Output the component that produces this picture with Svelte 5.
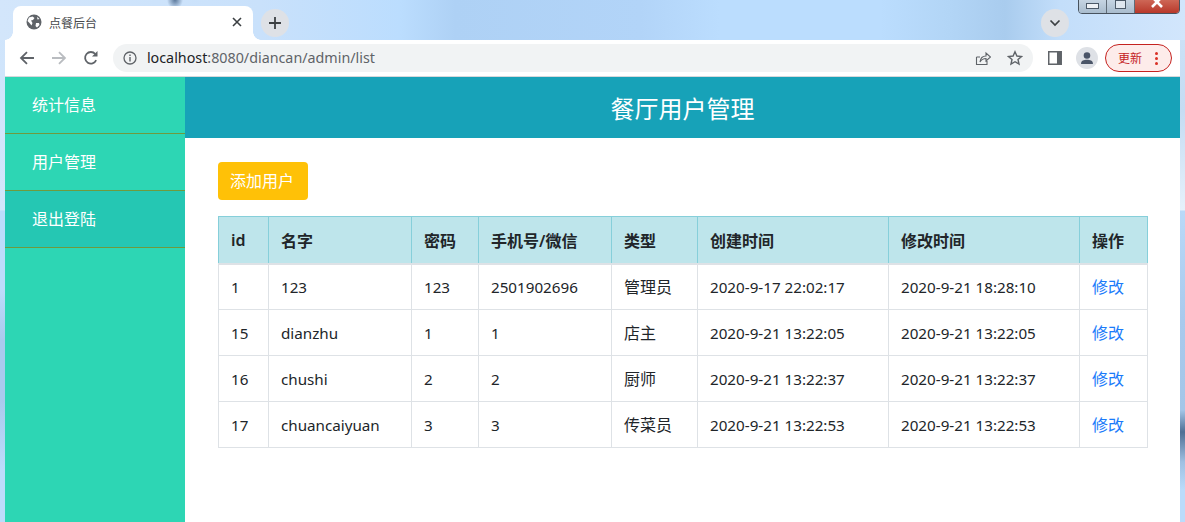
<script lang="ts">
  const menu = [
    { label: '统计信息', active: false },
    { label: '用户管理', active: false },
    { label: '退出登陆', active: true }
  ];

  const cols = ['id', '名字', '密码', '手机号/微信', '类型', '创建时间', '修改时间', '操作'];

  const users = [
    { id: 1, name: '123', pwd: '123', phone: '2501902696', type: '管理员', created: '2020-9-17 22:02:17', updated: '2020-9-21 18:28:10' },
    { id: 15, name: 'dianzhu', pwd: '1', phone: '1', type: '店主', created: '2020-9-21 13:22:05', updated: '2020-9-21 13:22:05' },
    { id: 16, name: 'chushi', pwd: '2', phone: '2', type: '厨师', created: '2020-9-21 13:22:37', updated: '2020-9-21 13:22:37' },
    { id: 17, name: 'chuancaiyuan', pwd: '3', phone: '3', type: '传菜员', created: '2020-9-21 13:22:53', updated: '2020-9-21 13:22:53' }
  ];
</script>

<div class="desktop">
  <div class="winctl">
    <span class="wbtn"><i class="min"></i></span>
    <span class="wbtn"><i class="max"></i></span>
    <span class="wbtn close">
      <svg width="14" height="11" viewBox="0 0 14 11"><path d="M2 -2 L12 8 M12 -2 L2 8" stroke="#fff" stroke-width="2.6" /></svg>
    </span>
  </div>

  <div class="browser">
    <div class="tabstrip">
      <div class="tab">
        <svg class="globe" width="16" height="16" viewBox="0 0 16 16">
          <circle cx="8" cy="8" r="7.5" fill="#5f6368" />
          <path d="M3 3.5 L6.5 2.5 L8.500 4 L7 6 L5 6.500 L6.500 9 L5.500 11.500 L3.500 9 L1.500 7 Z M10 9 L13 9 L13.500 11 L11 13.500 L9.500 12 Z M11 2.800 L13.500 5 L11.500 5.500 Z" fill="#fff" />
        </svg>
        <span class="tabtitle">点餐后台</span>
        <svg class="tabx" width="12" height="12" viewBox="0 0 12 12">
          <path d="M2 2 L10 10 M10 2 L2 10" stroke="#3c4043" stroke-width="1.6" />
        </svg>
      </div>
      <button class="newtab" aria-label="new tab">
        <svg width="14" height="14" viewBox="0 0 14 14"><path d="M7 1 V13 M1 7 H13" stroke="#3c4043" stroke-width="1.8" /></svg>
      </button>
      <button class="tabsearch" aria-label="tab search">
        <svg width="12" height="8" viewBox="0 0 12 8"><path d="M1.500 1.500 L6 6 L10.500 1.500" fill="none" stroke="#3c4043" stroke-width="1.7" /></svg>
      </button>
    </div>

    <div class="toolbar">
      <svg class="navicon" width="16" height="16" viewBox="0 0 16 16"><path d="M15 8 H2 M8 2 L2 8 L8 14" fill="none" stroke="#5f6368" stroke-width="1.8" /></svg>
      <svg class="navicon" width="16" height="16" viewBox="0 0 16 16"><path d="M1 8 H14 M8 2 L14 8 L8 14" fill="none" stroke="#b9bcc0" stroke-width="1.8" /></svg>
      <svg class="navicon" width="16" height="16" viewBox="0 0 16 16">
        <path d="M13.200 10.200 A5.800 5.800 0 1 1 12.300 4" fill="none" stroke="#5f6368" stroke-width="1.8" />
        <path d="M14.500 1 V6.500 H9 Z" fill="#5f6368" />
      </svg>
      <div class="omnibox">
        <svg width="14" height="14" viewBox="0 0 14 14">
          <circle cx="7" cy="7" r="6" fill="none" stroke="#5f6368" stroke-width="1.3" />
          <path d="M7 6 V10.500 M7 3.400 V4.900" stroke="#5f6368" stroke-width="1.4" />
        </svg>
        <span class="url"><span class="host">localhost</span>:8080/diancan/admin/list</span>
        <svg class="share" width="16" height="16" viewBox="0 0 16 16">
          <path d="M1.500 7 V14.500 H12 V11 M1.500 7 H5 M5 12 C5.500 8 8 6 11 6 V3 L15.500 7 L11 11 V8.500 C8.500 8.500 6.500 9.500 5 12 Z" fill="none" stroke="#5f6368" stroke-width="1.1" />
        </svg>
        <svg class="star" width="16" height="16" viewBox="0 0 16 16">
          <path d="M8 1.800 L9.900 6 L14.500 6.500 L11 9.500 L12 14 L8 11.700 L4 14 L5 9.500 L1.500 6.500 L6.100 6 Z" fill="none" stroke="#5f6368" stroke-width="1.4" />
        </svg>
      </div>
      <svg class="panel" width="14" height="14" viewBox="0 0 14 14">
        <rect x="0" y="0" width="14" height="14" fill="#5f6368" />
        <rect x="1.500" y="1.500" width="7.500" height="11" fill="#fff" />
      </svg>
      <svg class="avatar" width="22" height="22" viewBox="0 0 22 22">
        <circle cx="11" cy="11" r="11" fill="#dee1e6" />
        <circle cx="11" cy="8.500" r="3.300" fill="#4a5568" />
        <path d="M5 17 C5 13.500 8 12.800 11 12.800 C14 12.800 17 13.500 17 17 Z" fill="#4a5568" />
      </svg>
      <div class="update">
        <span>更新</span>
        <span class="dots"><i></i><i></i><i></i></span>
      </div>
    </div>

    <div class="page">
      <nav class="side">
        {#each menu as item}
          <a class="side-item" class:active={item.active} href="#top">{item.label}</a>
        {/each}
      </nav>
      <main class="content">
        <header class="banner">餐厅用户管理</header>
        <div class="body">
          <button class="add">添加用户</button>
          <table>
            <thead>
              <tr>
                {#each cols as c}
                  <th>{c}</th>
                {/each}
              </tr>
            </thead>
            <tbody>
              {#each users as u}
                <tr>
                  <td class="num">{u.id}</td>
                  <td class="num">{u.name}</td>
                  <td class="num">{u.pwd}</td>
                  <td class="num">{u.phone}</td>
                  <td>{u.type}</td>
                  <td class="num">{u.created}</td>
                  <td class="num">{u.updated}</td>
                  <td><a class="edit" href="#top">修改</a></td>
                </tr>
              {/each}
            </tbody>
          </table>
        </div>
      </main>
    </div>
  </div>
</div>

<style>
  :global(body) {
    margin: 0;
    overflow: hidden;
  }

  /* wallpaper: top strip, then the two thin slivers either side of the window */
  .desktop {
    position: relative;
    width: 1185px;
    height: 522px;
    overflow: hidden;
    padding: 0 5px;
    box-sizing: border-box;
    font-family: "Noto Sans", "Noto Sans CJK SC", sans-serif;
    background-color: #bbdcfb;
    background-repeat: no-repeat;
    background-image:
      radial-gradient(ellipse 8px 9px at 175px 0, #5d7a9c, rgba(93, 122, 156, 0) 100%),
      linear-gradient(90deg, #d3e6fb 0, #c9e1fb 260px, #bbddfe 400px, #aed1f5 455px, #b2d4f8 640px, #bbddfe 720px, #bbddfe 880px, #b2d5f6 950px, #a9ccee 1005px, #c3defa 1060px, #d2e6fc 1185px),
      linear-gradient(180deg, #cfe4fb 0, #d2e6fb 210px, #bcdcfb 211px, #bcdcfb 290px, #a9caed 340px, #a9caed 400px, #bcdcfb 470px),
      linear-gradient(180deg, #cfe4f9 0, #c5dcf3 110px, #e6f1fb 210px, #b9d9f8 211px, #a9caed 320px, #a4c6e8 410px, #4f6f94 432px, #9fc0e2 462px, #bbdcfb 490px);
    background-size: 100% 6px, 100% 40px, 5px 100%, 5px 100%;
    background-position: 0 0, 0 0, 0 0, 100% 0;
  }

  .winctl {
    position: absolute;
    top: -8px;
    right: 5px;
    display: flex;
    height: 20px;
    border: 1px solid #47525e;
    border-radius: 0 0 4px 4px;
    overflow: hidden;
  }

  .wbtn {
    width: 27px;
    display: flex;
    align-items: center;
    justify-content: center;
    background: linear-gradient(180deg, #d5e2ee, #a9bccd);
    border-right: 1px solid #5f6c78;
  }

  .wbtn .min {
    width: 11px;
    height: 4px;
    margin-top: 6px;
    background: #eef2f6;
    border: 1px solid #4c5a68;
  }

  .wbtn .max {
    width: 9px;
    height: 7px;
    margin-top: 3px;
    background: #dfe7ef;
    border: 1px solid #4c5a68;
  }

  .wbtn.close {
    width: 44px;
    border-right: 0;
    align-items: flex-start;
    padding-top: 6px;
    background: linear-gradient(180deg, #d9806e, #b8382a);
  }

  .browser {
    display: flex;
    flex-direction: column;
    height: 100%;
  }

  .tabstrip {
    display: flex;
    align-items: flex-start;
    height: 40px;
    padding-left: 8px;
    box-sizing: border-box;
  }

  .tab {
    position: relative;
    display: flex;
    align-items: center;
    width: 240px;
    height: 34px;
    margin-top: 6px;
    padding: 0 10px 0 13px;
    box-sizing: border-box;
    background: #fff;
    border-radius: 8px 8px 0 0;
  }

  .tab::before,
  .tab::after {
    content: "";
    position: absolute;
    bottom: 0;
    width: 8px;
    height: 8px;
  }

  .tab::before {
    left: -8px;
    background: radial-gradient(circle at 0 0, transparent 7.500px, #fff 8px);
  }

  .tab::after {
    right: -8px;
    background: radial-gradient(circle at 100% 0, transparent 7.500px, #fff 8px);
  }

  .globe {
    margin-right: 7px;
    margin-top: -2px;
  }

  .tabtitle {
    flex: 1;
    font-size: 12px;
    color: #45484c;
    margin-top: -1px;
  }

  .tabx {
    margin-top: -2px;
  }

  .newtab,
  .tabsearch {
    display: flex;
    align-items: center;
    justify-content: center;
    width: 28px;
    height: 28px;
    padding: 0;
    border: 0;
    border-radius: 50%;
    background: #dee1e6;
    margin-top: 9px;
  }

  .newtab {
    margin-left: 8px;
  }

  .tabsearch {
    margin-left: auto;
    margin-right: 111px;
  }

  .toolbar {
    display: flex;
    align-items: center;
    height: 37px;
    background: #fff;
    padding: 0 8px 0 14px;
    border-bottom: 1px solid #d6d8db;
    box-sizing: border-box;
  }

  .navicon {
    margin-right: 16px;
  }

  .navicon:nth-child(3) {
    margin-right: 14px;
  }

  .omnibox {
    display: flex;
    align-items: center;
    width: 922px;
    height: 28px;
    padding: 0 10px;
    box-sizing: border-box;
    background: #f1f3f4;
    border-radius: 14px;
  }

  .url {
    flex: 1;
    margin-left: 10px;
    margin-top: -2px;
    font-size: 14.3px;
    color: #5f6368;
  }

  .host {
    color: #202124;
  }

  .share {
    margin-right: 16px;
  }

  .panel {
    margin-left: 15px;
  }

  .avatar {
    margin-left: 14px;
  }

  .update {
    display: flex;
    align-items: center;
    justify-content: space-between;
    width: 67px;
    height: 28px;
    margin-left: 7px;
    padding: 0 13px 0 12px;
    box-sizing: border-box;
    border: 1px solid #c5221f;
    border-radius: 14px;
    background: #fdecea;
    color: #c5221f;
    font-size: 12px;
  }

  .dots {
    display: flex;
    flex-direction: column;
    gap: 2px;
  }

  .dots i {
    width: 3px;
    height: 3px;
    border-radius: 50%;
    background: #d93025;
  }

  .page {
    flex: 1;
    display: flex;
    min-height: 0;
    background: #fff;
  }

  .side {
    width: 180px;
    flex-shrink: 0;
    background: #2dd6b4;
  }

  .side-item {
    display: block;
    box-sizing: border-box;
    height: 57px;
    padding-left: 27px;
    line-height: 57px;
    color: #fff;
    font-size: 16px;
    text-decoration: none;
    border-bottom: 1px solid #6f9a3e;
  }

  .side-item.active {
    background: #25c7b3;
  }

  .content {
    flex: 1;
    min-width: 0;
  }

  .banner {
    height: 61px;
    background: #17a2b8;
    color: #fff;
    font-size: 24px;
    line-height: 63px;
    text-align: center;
  }

  .body {
    padding: 24px 32px 0 33px;
  }

  .add {
    display: block;
    height: 38px;
    padding: 0 14px 2px 12px;
    border: 0;
    border-radius: 4px;
    background: #ffc107;
    color: #fff;
    font: inherit;
    font-size: 16px;
  }

  table {
    width: 930px;
    margin-top: 16px;
    border-collapse: collapse;
    table-layout: fixed;
    color: #212529;
    font-size: 16px;
  }

  th {
    height: 47px;
    padding: 0 12px;
    box-sizing: border-box;
    background: #bee5eb;
    border: 1px solid #86cfda;
    border-bottom: 2px solid #dee2e6;
    text-align: left;
    font-weight: 600;
  }

  th:nth-child(1) { width: 50px; }
  th:nth-child(2) { width: 143px; }
  th:nth-child(3) { width: 67px; }
  th:nth-child(4) { width: 133px; }
  th:nth-child(5) { width: 86px; }
  th:nth-child(6) { width: 191px; }
  th:nth-child(7) { width: 191px; }

  td {
    height: 46px;
    padding: 0 12px 2px;
    box-sizing: border-box;
    border: 1px solid #dee2e6;
  }

  td.num {
    padding-bottom: 0;
    font-size: 15.2px;
  }

  .edit {
    color: #1a7bfa;
    text-decoration: none;
  }
</style>
